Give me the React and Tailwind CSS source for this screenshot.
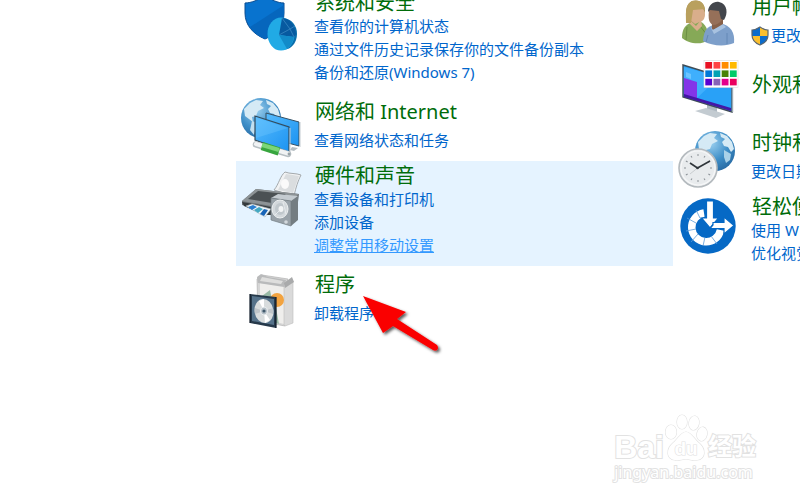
import clsx from 'clsx';

const CELLS = [
  ['#e81123', '#ff4343', '#ff8c00', '#ffb900'],
  ['#0078d7', '#00a3b4', '#498205', '#00cc6a'],
  ['#5a00d0', '#8764b8', '#e3008c', '#ea005e'],
];

function Icon({ children }) {
  return (
    <svg viewBox="0 0 64 64" className="mt-1 h-16 w-16 shrink-0" aria-hidden="true">
      {children}
    </svg>
  );
}

/* Blue globe with pale continents, shared by the network and clock icons */
function Globe({ cx, cy, id }) {
  return (
    <g transform={`translate(${cx} ${cy})`}>
      <defs>
        <radialGradient id={id} cx="0.4" cy="0.3" r="0.8">
          <stop offset="0" stopColor="#9bd0f0" />
          <stop offset="0.55" stopColor="#3f8fc8" />
          <stop offset="1" stopColor="#23639c" />
        </radialGradient>
      </defs>
      <circle r="20" fill={`url(#${id})`} />
      <path d="M-17-9 L-11-15 L-5-18 L2-17 L-1-13 L3-10 L-3-7 L-5-2 L-9-1 L-8 4 L-12 1 L-16-2 Z" fill="#d5eaf5" />
      <path d="M-9 3 L-3 5 L-2 9 L-6 13 L-7 17 L-11 12 Z" fill="#c3dfef" />
      <path d="M5-18 L12-15 L17-9 L19-2 L16 1 L13-4 L9-5 L7-9 L10-12 L6-14 Z" fill="#d5eaf5" />
      <path d="M9-1 L16 3 L15 9 L11 12 L9 6 Z" fill="#a9d1e8" />
    </g>
  );
}

function SecurityIcon() {
  return (
    <Icon>
      <path d="M25 3 C19 8 11 11 5 11 V21 C5 33 13 42 25 47 C37 42 44 33 44 21 V11 C38 11 31 8 25 3 Z" fill="#0873cf" stroke="#0b4c91" strokeWidth="1" />
      <path d="M44 13 V22 C43 33 36 42 25 47 C18 44 13 40 10 35 Z" fill="#0666bd" />
      <ellipse cx="44" cy="42" rx="13" ry="15.5" fill="#0a6dab" />
      <ellipse cx="41" cy="42" rx="13.5" ry="16.5" fill="#21aae5" />
      <path d="M42 26 C49 26 54 31 56 42 L54 45 L39 43 Z" fill="#075aa0" />
      <path d="M42 26 L50 37 L39 43 M50 37 L55 34 M50 37 L54 45" fill="none" stroke="#3a88c2" strokeWidth="0.8" />
      <path d="M39 43 L54 45 C53 50 51 54 47 57 Z" fill="#128bc9" />
    </Icon>
  );
}

function NetworkIcon() {
  return (
    <Icon>
      <defs>
        <linearGradient id="screen" x1="0" y1="0" x2="1" y2="1">
          <stop offset="0" stopColor="#56bbfd" />
          <stop offset="1" stopColor="#1c93f1" />
        </linearGradient>
      </defs>
      <Globe cx={21} cy={21} id="netGlobe" />
      <path d="M26 16 L59 25 V49 L26 40 Z" fill="url(#screen)" stroke="#365063" strokeWidth="1" />
      <path d="M60 25 V50" stroke="#c3ccd1" strokeWidth="1" />
      <path d="M52 50 L58 51 L54 54 L50 53 Z" fill="#b4bdc2" />
      <path d="M15 19 L49 30 V55 L15 43 Z" fill="url(#screen)" stroke="#344c5d" strokeWidth="1.2" />
      <path d="M16 20.500 L48 31 L16 41 Z" fill="#79ccff" opacity="0.3" />
      <path d="M50 31 V55" stroke="#c3ccd1" strokeWidth="1" />
      <path d="M16 47.500 L48 57" stroke="#b7bfc3" strokeWidth="6.5" strokeLinecap="round" />
      <path d="M16 47 L48 56.500" stroke="#f1f3f4" strokeWidth="4" strokeLinecap="round" />
      <path d="M22 49 L39 54.500" stroke="#38a53e" strokeWidth="8.5" />
      <path d="M22 48 L39 53" stroke="#7bd678" strokeWidth="4" />
      <circle cx="49" cy="57" r="1.4" fill="#9aa3a7" />
    </Icon>
  );
}

function HardwareIcon() {
  return (
    <Icon>
      <path d="M34 25 C39 19 40 11 45 7 C50 9 56 8 61 10 C58 16 56 22 54 31 Z" fill="#f1f2f3" stroke="#a4a9ac" strokeWidth="1" />
      <path d="M46 9 L59 11 L53 28 L38 25 Z" fill="#dadddf" />
      <ellipse cx="45" cy="19" rx="4" ry="5" fill="#fafafa" />
      <path d="M2 36 L16 24 L59 29 L58 37 L34 48 L2 40 Z" fill="#6c7275" />
      <path d="M2 36 L16 24 L59 29 L45 39 L31 41 Z" fill="#8d9396" />
      <path d="M8 34 L18 26 L46 29 L32 38 Z" fill="#4b5154" />
      <path d="M2 37 L31 42 V50 L24 50 L4 41 Z" fill="#34393c" />
      <path d="M6 41 L12 39 L31 44 L25 52 Z" fill="#f2f7fa" stroke="#a4b1b8" strokeWidth="0.6" />
      <path d="M8 42 L13 40 L17 42 L12 45 Z" fill="#2b7fd0" />
      <path d="M14 45 L19 42 L23 44 L18 48 Z" fill="#42a8c3" />
      <path d="M20 49 L24 44 L28 45 L24 51 Z" fill="#1965b8" />
      <path d="M51 36 L58 31 V55 L51 61 Z" fill="#747d82" />
      <path d="M31 33 L38 29 L58 31 L51 36 Z" fill="#c4cbd0" />
      <path d="M31 33 L51 36 V61 L31 55 Z" fill="#98a1a8" stroke="#737d83" strokeWidth="0.7" />
      <ellipse cx="40" cy="44" rx="8" ry="9" fill="#d3d8dc" stroke="#edf0f1" strokeWidth="1" />
      <ellipse cx="40" cy="44" rx="5" ry="6" fill="#c0c7cc" />
      <ellipse cx="41" cy="44" rx="2.5" ry="3" fill="#f2f4f5" />
      <ellipse cx="46" cy="57" rx="1.8" ry="1.8" fill="#d2d8dc" />
      <path d="M43 37 L46 49 M40 45 L35 50" stroke="#eef0f2" strokeWidth="0.8" />
    </Icon>
  );
}

function ProgramsIcon() {
  return (
    <Icon>
      <path d="M17 9 L22 5 L48 9 L45 17 V56 L18 51 Z" fill="#d6d6d6" stroke="#aaa" strokeWidth="0.6" />
      <path d="M20 13 L44 16 V54 L20 48 Z" fill="#efeeec" />
      <path d="M17 7 L21 4 L28 7 L46 10 L44 17 L18 13 Z" fill="#b9babb" />
      <path d="M22 7 L43 11 L41 14 L20 11 Z" fill="#dededd" />
      <path d="M44 17 L53 11 V53 L45 56 L44 55 Z" fill="#dadada" stroke="#bcbcbc" strokeWidth="0.6" />
      <path d="M44 13 L52 7 L54 12 L45 18 Z" fill="#a9aaab" />
      <path d="M22 26 L30 20 L32 30 L36 38 L39 54 L30 51 Z" fill="#98b9a5" />
      <circle cx="37" cy="30" r="7" fill="#f2a340" />
      <path d="M10 24 L36 27 V58 L10 53 Z" fill="#26394a" />
      <path d="M12 26 L34 29 V55 L12 51 Z" fill="#55728a" />
      <ellipse cx="24" cy="41" rx="9.5" ry="12" fill="#d8dcdd" transform="rotate(-8 24 41)" />
      <path d="M24 41 L19 31 L24 29 Z M24 41 L30 50 L25 53 Z" fill="#fff" />
      <path d="M24 41 L15 38 L15 44 Z M24 41 L33 38 L33 44 Z" fill="#bfc5c9" />
      <ellipse cx="24" cy="41" rx="3.5" ry="4" fill="#b4bfc7" stroke="#f6f8f8" strokeWidth="0.8" />
      <circle cx="24" cy="41" r="1.6" fill="#41596c" />
      <path d="M10 24 V53 M36 27 V58" stroke="#101b28" strokeWidth="1.2" />
    </Icon>
  );
}

function UsersIcon() {
  return (
    <Icon>
      <path d="M5 46 C5 37 8 33 15 30 L22 29 C29 32 32 38 31 48 C24 54 10 51 5 46 Z" fill="#86a957" />
      <path d="M10 35 L9 48 M23 34 L30 43" stroke="#6b8f43" strokeWidth="1" />
      <path d="M9 30 C9 21 8 13 15 9 C22 7 28 11 28 19 L26 28 L13 31 Z" fill="#a58c50" />
      <path d="M15 17 L25 15 C29 20 29 26 25 29 L18 32 L13 28 Z" fill="#d9ae8b" />
      <path d="M13 28 L19 34 L24 28 L25 34 L20 39 L12 31 Z" fill="#d9ae8b" />
      <path d="M9 31 C9 19 8 13 15 9 C22 7 27 10 28 17 L16 18 L14 31 Z" fill="#b9a05e" />
      <path d="M26 49 C27 40 28 36 36 33 L43 31 C54 34 58 40 57 51 C48 55 35 54 26 49 Z" fill="#7d9fca" />
      <path d="M35 29 L35 38 L46 34 L46 26 Z" fill="#866049" />
      <path d="M33 34 L36 38 L46 32 L49 35 L37 42 Z" fill="#a8c2e0" />
      <path d="M32 18 C31 27 32 31 36 33 C43 33 47 26 48 19 L40 15 Z" fill="#967059" />
      <path d="M31 20 C31 13 37 9 42 10 C51 12 51 22 47 28 L44 27 L42 19 L33 18 Z" fill="#43464c" />
      <path d="M50 41 V52 M31 43 L29 50" stroke="#6488b6" strokeWidth="1" />
    </Icon>
  );
}

function AppearanceIcon() {
  return (
    <Icon>
      <path d="M30 42 L40 45 V53 L30 51 Z" fill="#aeb9c1" />
      <path d="M18 51 L29 48 L48 54 L39 58 Z" fill="#c3cbd1" />
      <path d="M6 5 L55 20 V52 L6 37 Z" fill="#29a1f7" stroke="#3f4d57" strokeWidth="1.4" />
      <path d="M7 7 L42 17 L19 39 L7 35 Z" fill="#48b5ff" opacity="0.7" />
      <path d="M7 18 L20 22 V39 L7 35 Z" fill="#8335e8" />
      <path d="M7 34 L54 48 V51 L7 37 Z" fill="#4416a6" />
      <path d="M9 12 L14 14 V19 L9 17 Z" fill="#6bc5ff" />
      <path d="M55.500 20 V52" stroke="#9daab2" strokeWidth="1.4" />
      <rect x="27" y="0.5" width="34" height="27" fill="#fff" stroke="#dadada" strokeWidth="0.6" />
      {CELLS.map((row, r) =>
        row.map((fill, c) => (
          <rect key={fill} x={28.3 + c * 8.2} y={2 + r * 8.4} width="6.8" height="6.6" fill={fill} />
        ))
      )}
    </Icon>
  );
}

function ClockIcon() {
  return (
    <Icon>
      <Globe cx={38} cy={23} id="clockGlobe" />
      <circle cx="21" cy="40" r="19" fill="#e8ebed" stroke="#b4babe" strokeWidth="1.6" />
      <circle cx="21" cy="40" r="17" fill="none" stroke="#f6f7f8" strokeWidth="1.2" />
      {[0, 30, 60, 90, 120, 150, 180, 210, 240, 270, 300, 330].map((deg) => (
        <path key={deg} d="M21 26 V28" stroke="#8b9196" strokeWidth="1" transform={`rotate(${deg} 21 40)`} />
      ))}
      <path d="M13 35 L20.5 40 L33 33" fill="none" stroke="#30363b" strokeWidth="1.6" />
      <path d="M20.5 40 L13 46" stroke="#b2b7ba" strokeWidth="0.6" />
      <circle cx="20.5" cy="40" r="1.3" fill="#30363b" />
    </Icon>
  );
}

function EaseIcon() {
  return (
    <Icon>
      <circle cx="31" cy="30" r="27.7" fill="#0669c5" />
      <path d="M27 17 A14.5 14.5 0 1 0 43.500 34" fill="none" stroke="#fff" strokeWidth="7.5" />
      <path d="M19 14 L23 22 M10 22 L19 27 M9 35 L19 33 M14 46 L21 38 M26 50 L28 41 M40 48 L34 40" stroke="#5b9bd8" strokeWidth="0.8" />
      <path d="M29.500 5 H36.500 V22 H41.500 L33 32 L24.500 22 H29.500 Z" fill="#fff" stroke="#0669c5" strokeWidth="1.2" />
      <path d="M36 26.500 H47 V21 L57 29.5 L47 38 V32.500 H33 L36 29 Z" fill="#fff" stroke="#0669c5" strokeWidth="1.2" />
    </Icon>
  );
}

function UacShield() {
  return (
    <svg viewBox="0 0 18 20" className="h-5 w-[18px] shrink-0" aria-hidden="true">
      <path d="M9 1 C6 3 3 4 1 4 V10 H9 Z" fill="#0b6ccc" />
      <path d="M9 1 C12 3 15 4 17 4 V10 H9 Z" fill="#fbbf2d" />
      <path d="M1 10 C1.500 14.500 4 17 9 19 V10 Z" fill="#fbbf2d" />
      <path d="M17 10 C16.500 14.500 14 17 9 19 V10 Z" fill="#0b6ccc" />
      <path d="M9 1 C6 3 3 4 1 4 V9 C1 14 4 17 9 19 C14 17 17 14 17 9 V4 C15 4 12 3 9 1 Z" fill="none" stroke="#59656f" strokeWidth="1.2" />
    </svg>
  );
}

const LEFT = [
  { title: '系统和安全', icon: SecurityIcon, links: ['查看你的计算机状态', '通过文件历史记录保存你的文件备份副本', '备份和还原(Windows 7)'] },
  { title: '网络和 Internet', icon: NetworkIcon, links: ['查看网络状态和任务'] },
  { title: '硬件和声音', icon: HardwareIcon, links: ['查看设备和打印机', '添加设备', '调整常用移动设置'], active: 2 },
  { title: '程序', icon: ProgramsIcon, links: ['卸载程序'] },
];

const RIGHT = [
  { title: '用户帐', icon: UsersIcon, links: ['更改'], shield: true },
  { title: '外观和', icon: AppearanceIcon, links: [] },
  { title: '时钟和', icon: ClockIcon, links: ['更改日期'] },
  { title: '轻松使', icon: EaseIcon, links: ['使用 W', '优化视觉'] },
];

function Category({ title, icon: CategoryIcon, links, active, shield }) {
  return (
    <section className={clsx('flex gap-2.5 pl-1', active !== undefined && 'bg-[#e5f3ff]')}>
      <CategoryIcon />
      <div className={clsx('pb-[9px]', links.length === 1 && 'pt-1', links.length === 0 && 'pt-[14px]')}>
        <h2 className="pl-px text-[20px] leading-[29px] text-[#006c0a]">
          <a href="#">{title}</a>
        </h2>
        <ul className={links.length === 1 ? 'mt-[3px]' : '-mt-0.5'}>
          {links.map((link, i) => (
            <li key={link} className="flex items-center gap-0.5 text-[15px] leading-[23px]">
              {shield && <UacShield />}
              <a href="#" className={i === active ? 'text-[#3399ff] underline' : 'text-[#0066cc]'}>
                {link}
              </a>
            </li>
          ))}
        </ul>
      </div>
    </section>
  );
}

function Pointer() {
  return (
    <svg viewBox="0 0 88 68" className="absolute top-[290px] left-[358px] h-[68px] w-[88px]" aria-hidden="true">
      <defs>
        <filter id="shadow" x="-20%" y="-20%" width="150%" height="150%">
          <feDropShadow dx="2" dy="2" stdDeviation="1.5" floodColor="#000" floodOpacity="0.65" />
        </filter>
      </defs>
      <path d="M5 6 L48 22 L39 29 L79 55 Q81 58 79 60 Q77 61 75 60 L35 36 L25 43 Z" fill="#fa0505" filter="url(#shadow)" />
    </svg>
  );
}

function Watermark() {
  return (
    <div className="absolute right-11 bottom-[18px] text-white [-webkit-text-stroke:2px_#e2e2e2] [paint-order:stroke_fill]">
      <div className="flex items-end font-['Liberation_Sans','Noto_Sans_CJK_SC',sans-serif] font-bold">
        <span className="text-[32px] leading-[30px]">Bai</span>
        <svg viewBox="0 0 44 48" className="h-12 w-11" aria-hidden="true">
          <g fill="#fff" stroke="#e2e2e2" strokeWidth="1.2">
            <ellipse cx="7" cy="18" rx="5.5" ry="7" />
            <ellipse cx="18" cy="8" rx="5" ry="7" />
            <ellipse cx="30" cy="9" rx="5" ry="7" transform="rotate(10 30 9)" />
            <ellipse cx="38" cy="20" rx="5" ry="7" transform="rotate(12 38 20)" />
            <path d="M22 18 C27 18 30 25 35 29 C42 35 42 45 33 46 C28 47 26 45 22 45 C18 45 15 47 11 46 C2 45 2 35 9 29 C14 25 17 18 22 18 Z" />
            <text x="22" y="41" textAnchor="middle" fontSize="19">du</text>
          </g>
        </svg>
        <span className="text-[24px] leading-[30px]">经验</span>
      </div>
      <div className="text-[16px] leading-5">jingyan.baidu.com</div>
    </div>
  );
}

export default function App() {
  return (
    <main className="relative min-h-screen overflow-hidden bg-white font-['Noto_Sans','Noto_Sans_CJK_SC',sans-serif]">
      <div className="-mt-3 grid grid-cols-[minmax(0,1fr)_127px] items-start pl-[236px] whitespace-nowrap">
        <div>
          {LEFT.map((item) => (
            <Category key={item.title} {...item} />
          ))}
        </div>
        <div className="overflow-hidden">
          {RIGHT.map((item) => (
            <Category key={item.title} {...item} />
          ))}
        </div>
      </div>
      <Pointer />
      <Watermark />
    </main>
  );
}
